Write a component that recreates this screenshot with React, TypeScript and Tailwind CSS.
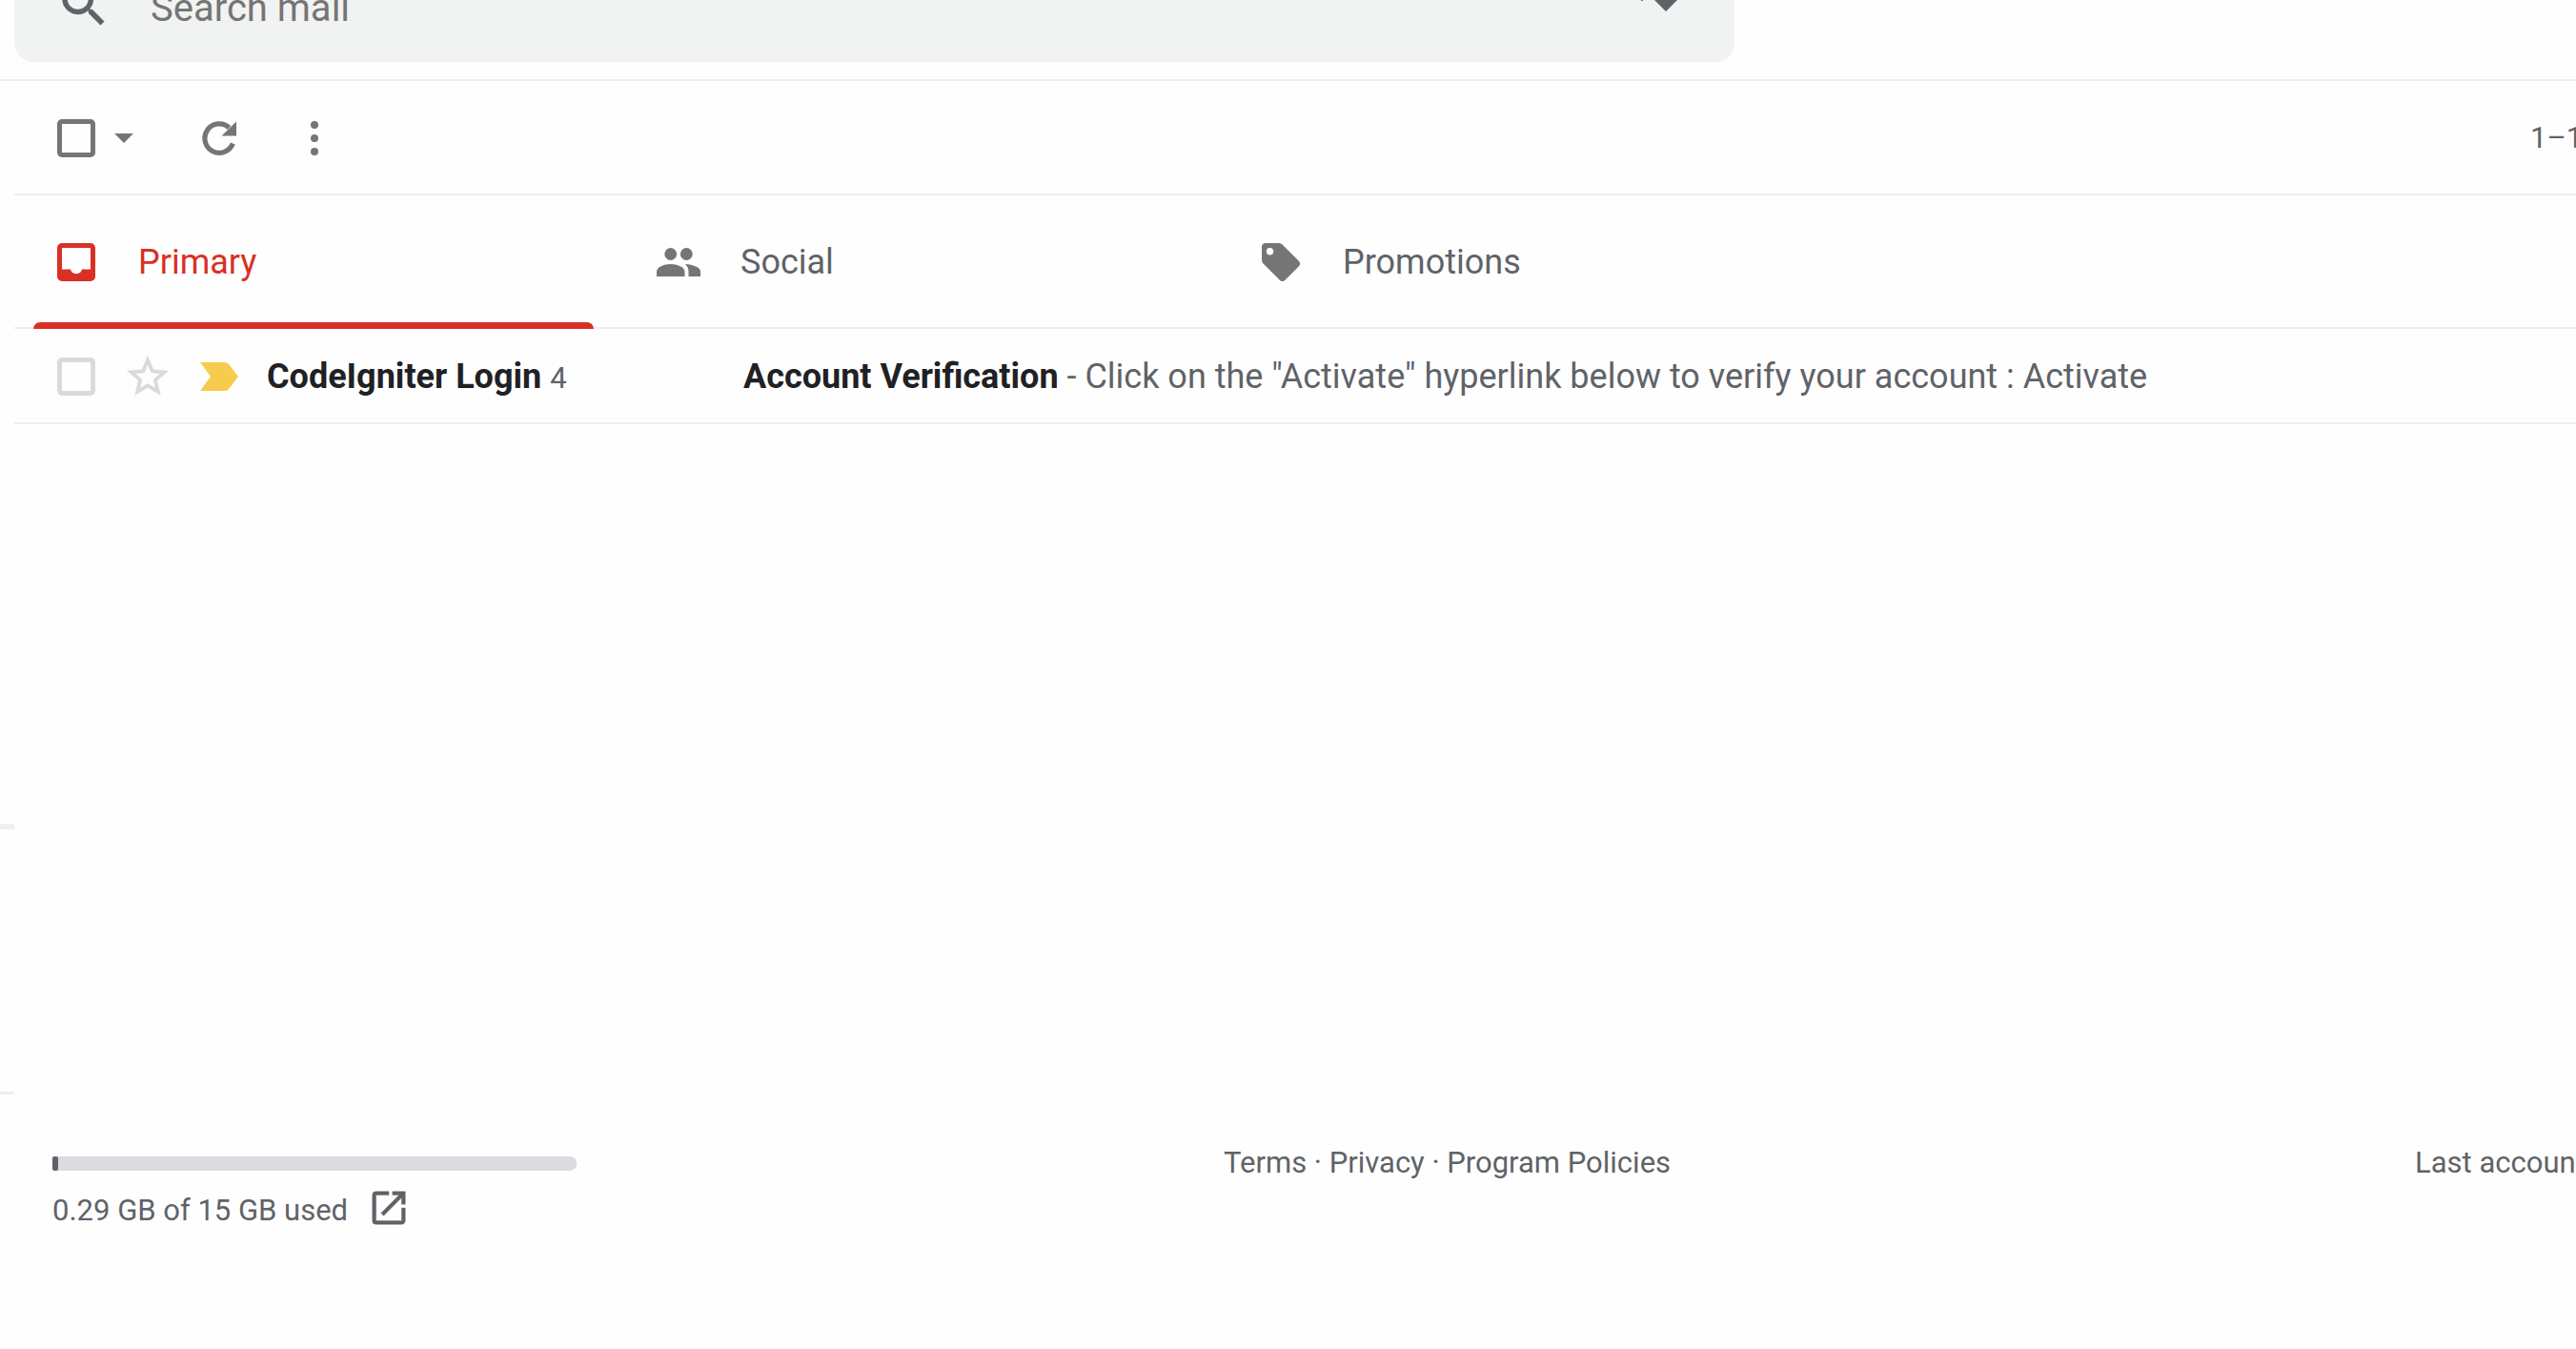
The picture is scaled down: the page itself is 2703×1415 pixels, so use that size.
import React from "react";

const PATHS = {
  search:
    "M15.5 14h-.79l-.28-.27A6.471 6.471 0 0 0 16 9.5 6.5 6.5 0 1 0 9.5 16c1.61 0 3.09-.59 4.23-1.57l.27.28v.79l5 4.99L20.49 19l-4.99-5zm-6 0C7.01 14 5 11.99 5 9.5S7.01 5 9.5 5 14 7.01 14 9.5 11.99 14 9.5 14z",
  star:
    "M22 9.24l-7.19-.62L12 2 9.19 8.63 2 9.24l5.46 4.73L5.82 21 12 17.27 18.18 21l-1.63-7.03L22 9.24zM12 15.4l-3.76 2.27 1-4.28-3.32-2.88 4.38-.38L12 6.1l1.71 4.04 4.38.38-3.32 2.88 1 4.28L12 15.4z",
  open:
    "M19 19H5V5h7V3H5a2 2 0 0 0-2 2v14a2 2 0 0 0 2 2h14c1.1 0 2-.9 2-2v-7h-2v7zM14 3v2h3.59l-9.83 9.83 1.41 1.41L19 6.41V10h2V3h-7z",
};

function Icon({ d, className }: { d: string; className: string }) {
  return (
    <svg viewBox="0 0 24 24" fill="currentColor" stroke="currentColor" strokeWidth="0.2" aria-hidden="true" className={className}>
      <path d={d} />
    </svg>
  );
}

function RefreshIcon() {
  return (
    <svg viewBox="0 0 36 36" fill="none" aria-hidden="true" className="size-9">
      <path d="M32.300 23.500A15.200 15.200 0 1 1 28.500 7" stroke="currentColor" strokeWidth="5.200" />
      <path d="M36 .5V15.500H20.500z" fill="currentColor" />
    </svg>
  );
}

function InboxIcon() {
  return (
    <svg viewBox="0 0 40 40" fill="currentColor" aria-hidden="true" className="size-10">
      <path
        fillRule="evenodd"
        d="M5 0h30a5 5 0 0 1 5 5v30a5 5 0 0 1-5 5H5a5 5 0 0 1-5-5V5a5 5 0 0 1 5-5zM5 5v22.500h9a6.200 6.200 0 0 0 12 0h9V5z"
      />
    </svg>
  );
}

function PeopleIcon() {
  return (
    <svg viewBox="0 0 46 30" fill="currentColor" aria-hidden="true" className="h-[30px] w-[46px]">
      <circle cx="14.700" cy="6.500" r="6.400" />
      <circle cx="31.300" cy="6.500" r="6.400" />
      <path d="M0 30v-5c0-5 8-8 14.700-8s14.800 3 14.800 8v5z" />
      <path d="M30 17.100C38 17.500 46 20.500 46 25v5H33.500v-5c0-3.200-1.200-5.900-3.500-7.900z" />
    </svg>
  );
}

function TagIcon() {
  return (
    <svg viewBox="0 0 40 40" fill="currentColor" aria-hidden="true" className="size-10">
      <path
        fillRule="evenodd"
        d="M4 0h14a5 5 0 0 1 3.500 1.500l17.300 17.300a4 4 0 0 1 0 5.600L24.400 38.800a4 4 0 0 1-5.600 0L1.500 21.500A5 5 0 0 1 0 18V4a4 4 0 0 1 4-4zM8.500 5a3.700 3.700 0 1 0 0 7.400 3.700 3.700 0 0 0 0-7.400z"
      />
    </svg>
  );
}

const tabs = [
  { label: "Primary", icon: <InboxIcon />, active: true },
  { label: "Social", icon: <PeopleIcon />, active: false },
  { label: "Promotions", icon: <TagIcon />, active: false },
];

function Header() {
  return (
    <header className="flex h-[85px] items-start border-b-2 border-[#ebeff2] pl-[15px]">
      <form role="search" className="flex h-[65px] w-full max-w-[1805px] items-end overflow-hidden rounded-b-[20px] bg-[#f1f3f2]">
        <button type="button" aria-label="Search" className="mb-[30px] ml-[43px] text-[#5f6368]">
          <Icon d={PATHS.search} className="size-[60px]" />
        </button>
        <input
          type="text"
          aria-label="Search mail"
          placeholder="Search mail"
          className="mb-[32px] ml-10 h-12 min-w-0 flex-1 bg-transparent text-[40px] leading-[48px] text-[#5f6368] outline-none placeholder:text-[#757575]"
        />
        <button type="button" aria-label="Show search options" className="mr-[59px] mb-[53px] text-[#5f6368]">
          <svg viewBox="0 0 40 13" fill="currentColor" className="h-[13px] w-10">
            <path d="M0 0h3v1.500H1z" className="text-black" />
            <path d="M14 0h26L27 13z" />
          </svg>
        </button>
      </form>
    </header>
  );
}

function Toolbar() {
  return (
    <div className="ml-[15px] flex h-[120px] items-center border-b-2 border-[#ebeff2] pt-0.5 pl-[45px] text-[#757575]">
      <input
        type="checkbox"
        aria-label="Select all"
        className="size-10 shrink-0 appearance-none rounded-[5px] border-[5px] border-[#757575]"
      />
      <button type="button" aria-label="Select options" className="ml-5">
        <svg viewBox="0 0 20 10" fill="currentColor" className="h-[10px] w-5">
          <path d="M0 0h20L10 10z" />
        </svg>
      </button>
      <button type="button" aria-label="Refresh" className="ml-[72px]">
        <RefreshIcon />
      </button>
      <button type="button" aria-label="More" className="ml-[78px]">
        <svg viewBox="0 0 8 36" fill="currentColor" className="h-9 w-2">
          <circle cx="4" cy="4" r="4" />
          <circle cx="4" cy="18" r="4" />
          <circle cx="4" cy="32" r="4" />
        </svg>
      </button>
      <span className="ml-auto w-[48px] whitespace-nowrap text-[31px] text-[#5f6368]">1–1</span>
    </div>
  );
}

function Tabs() {
  return (
    <div role="tablist" className="ml-[15px] flex h-[140px] border-b-2 border-[#ebeff2]">
      {tabs.map((tab) => (
        <button
          key={tab.label}
          type="button"
          role="tab"
          aria-selected={tab.active}
          className={
            tab.active
              ? "relative flex w-[632px] items-center pt-0.5 pl-10 text-[#d93025]"
              : "relative flex w-[632px] items-center pt-0.5 pl-10 text-[#5f6368]"
          }
        >
          <span className={tab.active ? "flex w-[50px] shrink-0 justify-center" : "flex w-[50px] shrink-0 justify-center text-[#757575]"}>
            {tab.icon}
          </span>
          <span className="ml-10 text-[36px] font-[450]">{tab.label}</span>
          {tab.active && (
            <span className="absolute right-6 -bottom-0.5 left-5 h-[7px] rounded-t-[7px] bg-[#d93025]" />
          )}
        </button>
      ))}
    </div>
  );
}

function MailRow() {
  return (
    <div className="ml-[15px] flex h-[100px] items-center border-b-2 border-[#ebeff2] pt-0.5 pl-[45px] text-[36px] whitespace-nowrap">
      <input
        type="checkbox"
        aria-label="Select conversation"
        className="size-10 shrink-0 appearance-none rounded-[5px] border-[5px] border-[#d9dbda]"
      />
      <button type="button" aria-label="Star" className="ml-[29px] text-[#d9dbda]">
        <Icon d={PATHS.star} className="size-[52px]" />
      </button>
      <button type="button" aria-label="Important" className="ml-[29px] text-[#f7cb4d]">
        <svg viewBox="0 0 40 30" fill="currentColor" className="h-[30px] w-10">
          <path d="M0 0h26q3 0 4.500 2.500L40 15l-9.500 12.500Q29 30 26 30H0l11-15z" />
        </svg>
      </button>
      <span className="ml-[30px] w-[500px] shrink-0 text-[#202124]">
        <b>CodeIgniter Login</b> <span className="text-[31px] text-[#5f6368]">4</span>
      </span>
      <a href="#message" className="text-[#5f6368]">
        <b className="text-[#202124]">Account Verification</b> - Click on the "Activate" hyperlink below to verify your account : Activate
      </a>
    </div>
  );
}

function Footer() {
  return (
    <footer className="mt-[65px] flex items-start pl-[55px] text-[31px] leading-[36px] whitespace-nowrap text-[#5f6368]">
      <div className="w-[550px]">
        <div className="h-[15px] rounded-[7px] bg-[#dadce0]">
          <div className="h-full w-[6px] rounded-[2px] bg-[#5f6368]" />
        </div>
        <div className="mt-4 flex items-start">
          <span className="pt-2">0.29 GB of 15 GB used</span>
          <a href="#storage" aria-label="Manage storage" className="ml-5">
            <Icon d={PATHS.open} className="size-[46px]" />
          </a>
        </div>
      </div>
      <nav className="-mt-[11px] ml-[679px]">
        <a href="#terms">Terms</a> · <a href="#privacy">Privacy</a> · <a href="#policies">Program Policies</a>
      </nav>
      <span className="-mt-[11px] ml-auto w-[169px]">Last accoun</span>
    </footer>
  );
}

export default function App() {
  return (
    <div className="min-h-screen overflow-hidden bg-[#fefefe] font-['Roboto',sans-serif]">
      <Header />
      <main>
        <Toolbar />
        <Tabs />
        <MailRow />
      </main>
      <aside className="mt-[419px] flex h-[284px] w-[15px] flex-col border-b-[3px] border-[#ebeff2]">
        <div className="h-[6px] rounded-tr-[3px] bg-[#efefef]" />
      </aside>
      <Footer />
    </div>
  );
}
